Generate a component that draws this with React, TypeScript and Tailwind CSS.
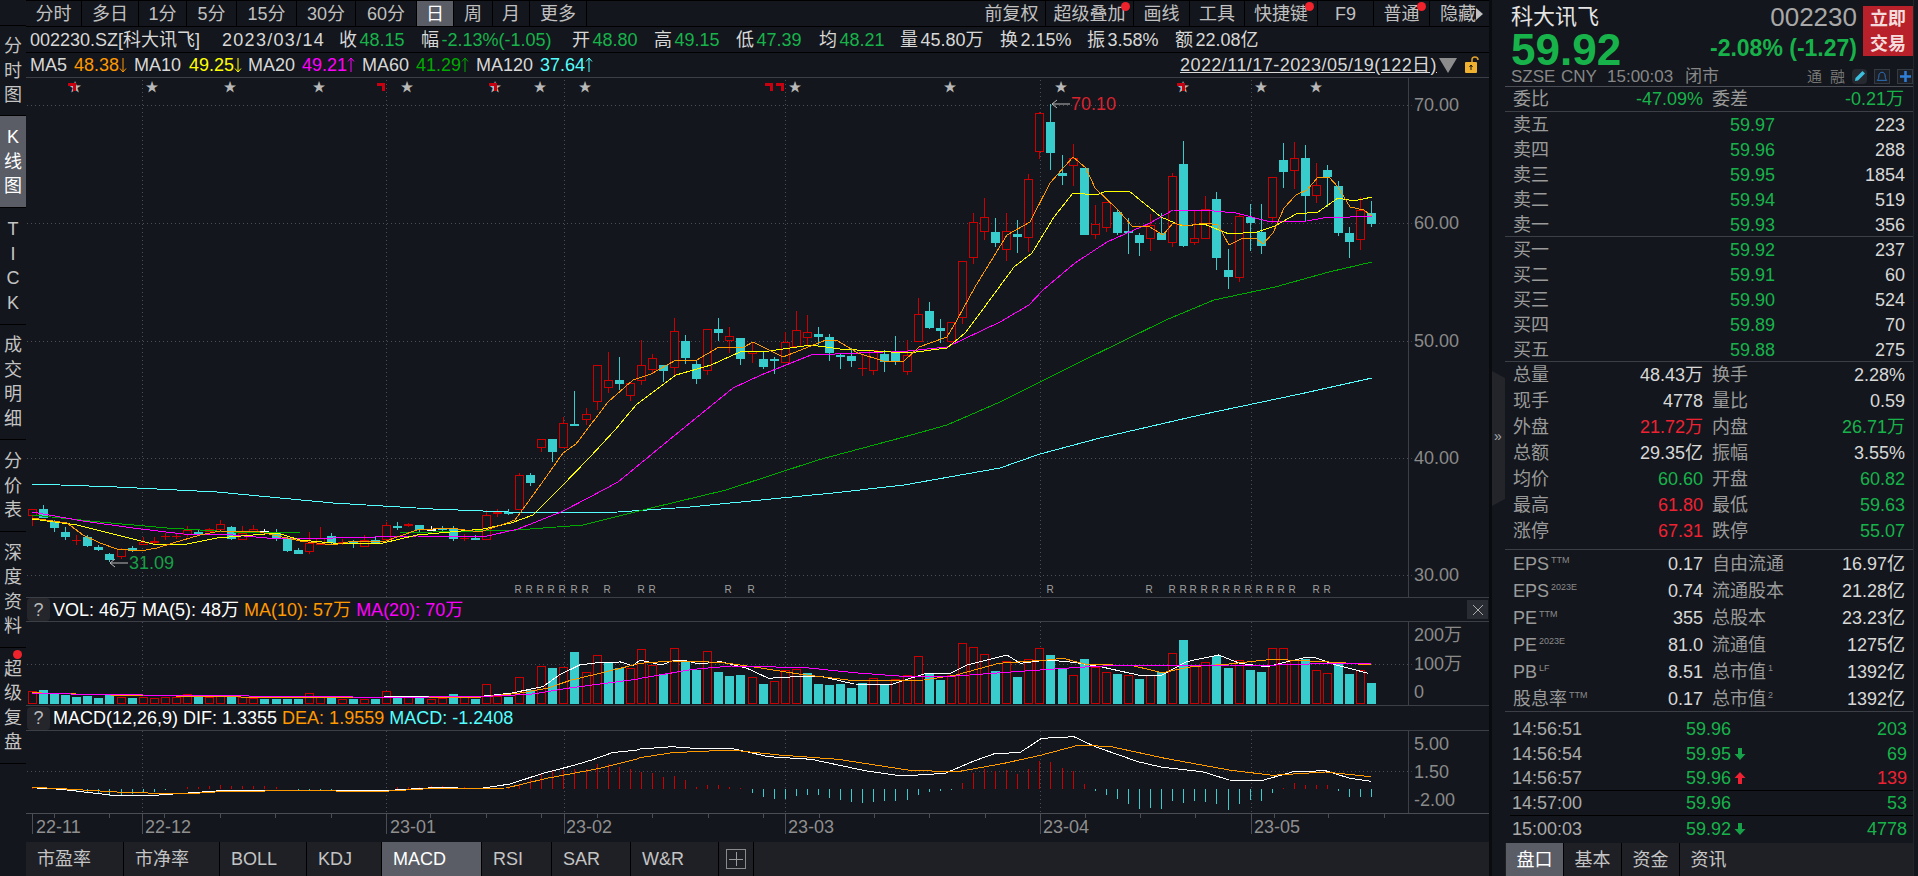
import React from "react";

type Candle = [number, number, number, number, number]; // corpo topo, corpo base, maxima, minima, 0 cai / 1 sobe / 2 neutro

const GREEN = "text-[#18b24b]";
const RED = "text-[#ee2233]";

const candles: Candle[] = [
  [509,515,509,526,1],[509,518,505,518,0],[522,528,520,532,0],[532,537,527,540,0],[540,540,535,545,1],
  [537,546,535,547,0],[547,550,545,551,0],[554,560,553,562,0],[549,556,548,559,1],[548,551,546,552,0],
  [542,544,537,545,1],[541,542,537,544,1],[536,536,533,540,1],[536,536,533,539,1],[530,534,526,537,1],
  [532,532,529,534,0],[529,531,528,532,1],[524,529,520,532,1],[527,539,526,540,0],[533,539,526,539,1],
  [529,531,525,533,1],[531,531,529,534,2],[532,539,529,541,0],[539,551,537,552,0],[550,554,548,554,0],
  [543,551,532,554,1],[538,544,527,545,1],[536,543,533,544,0],[542,542,539,545,1],[541,544,540,548,0],
  [540,546,535,547,1],[540,544,537,544,0],[525,539,522,540,1],[526,526,522,530,0],[524,525,523,527,1],
  [525,530,525,532,0],[529,529,526,531,2],[528,528,526,532,0],[528,539,526,541,0],[538,538,534,541,1],
  [538,538,535,540,0],[515,539,510,539,1],[512,513,509,517,1],[512,512,509,515,0],[475,509,473,510,1],
  [475,483,473,486,0],[439,447,439,452,1],[439,452,439,462,0],[423,447,417,448,1],[424,424,391,425,0],
  [414,419,408,425,1],[365,401,365,410,1],[380,387,352,393,1],[380,384,357,390,0],[383,395,383,401,1],
  [365,380,340,385,1],[358,369,354,374,1],[365,371,365,382,0],[331,367,318,375,1],[341,358,335,364,0],
  [364,379,360,384,0],[329,370,329,375,1],[329,333,318,341,0],[336,340,327,353,1],[338,359,338,365,0],
  [351,353,342,363,1],[359,367,352,369,0],[359,359,357,374,0],[342,362,332,362,1],[330,346,311,348,1],
  [332,337,315,345,1],[334,337,327,345,0],[337,353,334,361,0],[355,357,353,369,0],[356,361,348,367,0],
  [368,368,355,376,1],[350,370,350,375,1],[354,362,350,372,0],[351,361,336,365,0],[355,371,340,375,1],
  [314,341,298,341,1],[311,328,302,329,0],[328,331,319,343,0],[322,341,322,343,1],[261,317,261,324,1],
  [222,257,213,264,1],[217,231,198,240,1],[232,243,218,247,0],[231,249,213,261,1],[234,237,220,253,0],
  [179,237,174,252,1],[113,151,112,159,1],[122,153,104,170,0],[173,176,155,185,0],[158,165,144,186,1],
  [168,235,168,235,0],[224,234,205,239,1],[202,227,202,232,1],[212,233,209,235,0],[231,231,218,254,0],
  [235,243,233,256,0],[225,238,214,251,1],[233,240,213,240,0],[176,242,173,247,1],[164,246,141,247,0],
  [238,242,210,245,1],[209,238,196,238,1],[199,258,192,270,0],[270,277,249,289,0],[216,277,213,282,1],
  [217,223,204,251,0],[232,246,204,254,0],[177,217,177,223,1],[160,172,143,188,0],[158,170,142,189,1],
  [158,196,145,221,0],[185,195,163,203,1],[170,177,165,207,0],[186,233,181,236,0],[233,242,227,258,0],
  [210,239,197,250,1],[213,224,201,227,0],
];

const ma120 = "32,484 117,487 217,492 333,503 433,509 508,512 561,513 618,512 690,507 761,500 833,493 904,485 1000,468 1040,454 1100,438 1200,415 1300,394 1372,378";
const ma60 = "32,515 100,522 167,528 233,532 300,533 400,533 433,532 517,530 583,525 647,509 726,490 818,460 904,437 947,425 1000,402 1080,362 1166,320 1214,300 1275,287 1329,272 1372,262";
const ma20 = "32,512 83,521 133,528 183,534 233,535 267,538 333,538 417,536 483,537 518,529 561,512 590,497 618,482 669,440 733,388 761,375 811,355 908,351 947,347 1000,322 1029,305 1043,290 1075,263 1107,242 1150,223 1173,210 1214,211 1236,213 1271,222 1307,221 1329,217 1350,217 1372,216";
const ma10 = "32,519 77,525 117,535 157,545 187,544 217,538 277,533 300,540 333,543 383,543 417,535 450,532 483,529 511,523 533,515 561,487 590,457 615,430 636,405 669,380 676,375 711,365 740,352 769,351 811,345 840,349 908,353 947,348 965,333 975,320 1014,267 1032,253 1054,217 1073,193 1096,195 1107,191 1129,191 1161,217 1182,226 1204,224 1229,234 1257,232 1275,226 1296,214 1318,212 1338,198 1354,201 1372,197";
const ma5 = "32,518 67,523 83,535 100,543 117,549 140,551 157,548 173,543 200,535 220,531 260,532 300,541 333,545 353,541 383,542 417,530 450,528 480,532 507,523 515,520 544,480 563,453 576,444 608,402 633,380 651,374 676,360 695,361 719,347 744,347 753,342 783,357 826,340 836,340 858,353 883,361 904,361 919,347 947,337 957,320 975,287 1007,235 1030,222 1050,183 1073,157 1086,168 1095,188 1118,210 1132,226 1150,227 1163,235 1173,223 1186,226 1205,223 1218,225 1229,245 1243,238 1257,239 1263,244 1273,233 1284,208 1296,195 1307,190 1318,177 1329,177 1338,187 1350,207 1364,210 1372,216";

// topo das barras de volume; negativo = barra vermelha
const volTops = [
  -393,390,402,405,412,407,414,405,-412,414,-412,-415,-412,-412,-403,408,-410,-408,408,-411,
  -415,416,416,416,416,-400,-407,410,-418,417,-416,416,-394,412,-408,412,-416,-413,403,-408,
  416,-373,-408,410,-352,390,-319,324,-322,276,-337,-286,310,325,-325,-268,-315,343,-265,305,
  330,-274,336,348,345,-352,372,-364,-331,-328,340,372,375,372,384,369,-355,372,-358,-345,
  -289,342,360,-345,-250,-262,-283,333,-304,351,-298,-265,285,327,-346,297,-322,-337,342,-346,
  357,-345,337,-280,240,-318,-305,287,323,-300,330,336,-265,-265,-300,298,-330,-340,312,342,
  -330,369,
];

const macdBars = [
  2,1,0,-1,-9,-10,-17,-22,-18,-15,-14,-10,-3,0,5,6,8,11,8,8,7,7,5,-2,-3,-5,-4,-3,0,-2,0,0,0,5,5,6,7,7,6,4,3,2,3,6,
  15,28,43,52,55,58,60,75,73,65,58,51,46,34,37,26,6,10,11,6,3,-12,-25,-31,-31,-23,-20,-20,-28,-35,-40,-43,-40,-37,
  -38,-33,-20,-10,-7,-5,16,46,60,54,56,44,58,83,80,61,54,14,-8,-18,-30,-45,-60,-57,-62,-38,-43,-38,-40,-47,-64,-47,
  -35,-37,-14,2,16,12,10,10,-8,-26,-24,-26,
];

const leftPts = (p: number[]) => {
  const out: string[] = [];
  for (let i = 0; i < p.length; i += 2) out.push(`${(p[i] / 2.45).toFixed(1)},${(560 + p[i + 1] / 3).toFixed(1)}`);
  return out.join(" ");
};
const rightPts = (p: number[]) => {
  const out: string[] = [];
  for (let i = 0; i < p.length; i += 2) out.push(`${(640 + p[i] / 1.867).toFixed(1)},${(560 + p[i + 1] / 3).toFixed(1)}`);
  return out.join(" ");
};

const volWhite = leftPts([78,398,270,405,700,413,940,411,1170,410,1250,400,1330,380,1370,345,1420,315,1470,307,1520,306,1550,317]) + " " +
  rightPts([0,300,40,315,60,303,80,300,110,312,150,305,200,325,240,355,290,350,340,350,400,372,470,373,530,342,580,340,610,315,685,285,710,310,760,300,810,307,860,320,930,345,975,345,1020,305,1080,285,1120,310,1170,320,1240,293,1260,293,1300,315,1360,340]);
const volOrange = leftPts([78,398,270,405,700,413,940,411,1170,412,1270,400,1340,385,1400,360,1470,340,1520,325]) + " " +
  rightPts([0,310,60,303,150,307,210,320,300,343,400,362,470,362,530,360,590,345,670,310,760,300,790,295,830,312,920,317,975,338,1030,320,1100,312,1180,298,1240,302,1310,308,1365,315]);
const volPink = leftPts([78,400,270,404,610,408,940,412,1170,410,1300,403,1400,383,1560,358]) + " " +
  rightPts([0,355,100,328,170,318,310,323,400,338,500,350,590,348,700,335,820,322,900,315,1000,315,1100,315,1170,318,1200,313,1365,310]);
const macdWhite = leftPts([78,683,150,688,270,705,390,705,540,692,690,690,940,692,1060,683,1180,685,1250,672,1330,640,1400,618,1450,600,1500,578,1560,570]) + " " +
  rightPts([0,567,60,560,100,565,170,565,240,590,320,598,420,632,490,648,570,640,620,605,660,582,710,577,750,535,810,530,850,560,930,605,975,622,1050,635,1100,660,1160,662,1220,635,1280,632,1325,655,1365,664]);
const macdOrange = leftPts([78,682,150,686,300,697,450,702,540,695,700,692,940,694,1050,686,1240,684,1340,655,1470,625,1560,597]) + " " +
  rightPts([0,593,60,578,170,570,260,585,370,598,500,630,590,636,680,610,750,585,820,555,880,560,980,595,1100,630,1180,646,1280,636,1365,650]);

const gridX = [142, 386, 564, 785, 1040, 1251];
const stars = [75, 152, 230, 319, 407, 495, 540, 585, 795, 950, 1061, 1183, 1261, 1316];
const flags = [72, 381, 493, 769, 780, 1181];
const rMarks = [518, 529, 540, 551, 562, 574, 585, 607, 641, 652, 728, 751, 1050, 1149, 1172, 1183, 1193, 1204, 1215, 1226, 1237, 1248, 1259, 1270, 1281, 1292, 1316, 1327];
const shortTicks = [54, 109, 164, 220, 275, 331, 430, 486, 541, 597, 652, 708, 763, 819, 874, 929, 985, 1085, 1140, 1195, 1274, 1328, 1384];
const dateLabels: [string, number, number][] = [["22-11", 36, 32], ["22-12", 145, 142], ["23-01", 390, 386], ["23-02", 566, 564], ["23-03", 788, 785], ["23-04", 1043, 1040], ["23-05", 1254, 1251]];

const periodTabs = [
  { label: "分时", w: "w-[56px]" },
  { label: "多日", w: "w-[57px]" },
  { label: "1分", w: "w-[48px]" },
  { label: "5分", w: "w-[50px]" },
  { label: "15分", w: "w-[60px]" },
  { label: "30分", w: "w-[59px]" },
  { label: "60分", w: "w-[61px]" },
  { label: "日", w: "w-[37px]", active: true },
  { label: "周", w: "w-[39px]" },
  { label: "月", w: "w-[37px]" },
  { label: "更多", w: "w-[57px]" },
];

const toolTabs = [
  { label: "前复权", w: "w-[68px]" },
  { label: "超级叠加", w: "w-[88px]", dot: true },
  { label: "画线", w: "w-[56px]" },
  { label: "工具", w: "w-[55px]" },
  { label: "快捷键", w: "w-[73px]", dot: true },
  { label: "F9", w: "w-[56px]" },
  { label: "普通", w: "w-[56px]", dot: true },
];

const sideTabs = [
  { label: "分时图", h: "h-[90px]" },
  { label: "K线图", h: "h-[92px]", active: true },
  { label: "TICK", h: "h-[117px]" },
  { label: "成交明细", h: "h-[115px]" },
  { label: "分价表", h: "h-[92px]" },
  { label: "深度资料", h: "h-[116px]" },
  { label: "超级复盘", h: "h-[116px]", dot: true },
];

const indicatorTabs = [
  { label: "市盈率", w: "w-[98px]" },
  { label: "市净率", w: "w-[96px]" },
  { label: "BOLL", w: "w-[87px]" },
  { label: "KDJ", w: "w-[75px]" },
  { label: "MACD", w: "w-[100px]", active: true },
  { label: "RSI", w: "w-[70px]" },
  { label: "SAR", w: "w-[79px]" },
  { label: "W&R", w: "w-[88px]" },
];

const quoteItems = [
  { l: "收", v: "48.15", w: "w-[82px]", c: GREEN },
  { l: "幅", v: "-2.13%(-1.05)", w: "w-[151px]", c: GREEN },
  { l: "开", v: "48.80", w: "w-[82px]", c: GREEN },
  { l: "高", v: "49.15", w: "w-[82px]", c: GREEN },
  { l: "低", v: "47.39", w: "w-[83px]", c: GREEN },
  { l: "均", v: "48.21", w: "w-[81px]", c: GREEN },
  { l: "量", v: "45.80万", w: "w-[100px]", c: "" },
  { l: "换", v: "2.15%", w: "w-[87px]", c: "" },
  { l: "振", v: "3.58%", w: "w-[88px]", c: "" },
  { l: "额", v: "22.08亿", w: "", c: "" },
];

const asks = [["卖五", "59.97", "223"], ["卖四", "59.96", "288"], ["卖三", "59.95", "1854"], ["卖二", "59.94", "519"], ["卖一", "59.93", "356"]];
const bids = [["买一", "59.92", "237"], ["买二", "59.91", "60"], ["买三", "59.90", "524"], ["买四", "59.89", "70"], ["买五", "59.88", "275"]];

const stats = [
  ["总量", "48.43万", "", "换手", "2.28%", ""],
  ["现手", "4778", "", "量比", "0.59", ""],
  ["外盘", "21.72万", RED, "内盘", "26.71万", GREEN],
  ["总额", "29.35亿", "", "振幅", "3.55%", ""],
  ["均价", "60.60", GREEN, "开盘", "60.82", GREEN],
  ["最高", "61.80", RED, "最低", "59.63", GREEN],
  ["涨停", "67.31", RED, "跌停", "55.07", GREEN],
];

const funda = [
  ["EPS", "TTM", "0.17", "自由流通", "", "16.97亿"],
  ["EPS", "2023E", "0.74", "流通股本", "", "21.28亿"],
  ["PE", "TTM", "355", "总股本", "", "23.23亿"],
  ["PE", "2023E", "81.0", "流通值", "", "1275亿"],
  ["PB", "LF", "8.51", "总市值", "1", "1392亿"],
  ["股息率", "TTM", "0.17", "总市值", "2", "1392亿"],
];

const ticks = [
  { t: "14:56:51", p: "59.96", v: "203", c: GREEN, line: false },
  { t: "14:56:54", p: "59.95", v: "69", c: GREEN, a: "d", line: false },
  { t: "14:56:57", p: "59.96", v: "139", c: RED, a: "u", line: true },
  { t: "14:57:00", p: "59.96", v: "53", c: GREEN, line: true },
  { t: "15:00:03", p: "59.92", v: "4778", c: GREEN, a: "d", line: false },
];

const cx = (i: number) => Math.round(32 + 11.07 * i);

function SlimArrow({ up, color }: { up?: boolean; color: string }) {
  return (
    <svg width="8" height="16" viewBox="0 0 8 16" fill="none" stroke={color} strokeWidth="1">
      {up ? <path d="M4 15V1M1 4.500L4 1l3 3.500" /> : <path d="M4 1v14M1 11.500L4 15l3-3.500" />}
    </svg>
  );
}

function Candles() {
  return (
    <g shapeRendering="crispEdges">
      {candles.map((c, i) => {
        const x = cx(i);
        const color = c[4] === 1 ? "#cc0000" : c[4] === 2 ? "#ffffff" : "#38cccc";
        return (
          <g key={i}>
            <line x1={x + 0.5} x2={x + 0.5} y1={c[2]} y2={c[0]} stroke={color} />
            <line x1={x + 0.5} x2={x + 0.5} y1={c[1]} y2={c[3]} stroke={color} />
            {c[0] === c[1] ? (
              <line x1={x - 4} x2={x + 5} y1={c[0] + 0.5} y2={c[0] + 0.5} stroke={color} strokeWidth={c[4] === 1 ? 1 : 2} />
            ) : c[4] === 1 ? (
              <rect x={x - 3.5} y={c[0] + 0.5} width={8} height={c[1] - c[0]} fill="#13161c" stroke={color} />
            ) : (
              <rect x={x - 4} y={c[0]} width={9} height={c[1] - c[0]} fill={color} />
            )}
          </g>
        );
      })}
    </g>
  );
}

function Grid({ ys, y1, y2 }: { ys: number[]; y1: number; y2: number }) {
  return (
    <g stroke="#4a4e55" strokeDasharray="1 3" shapeRendering="crispEdges">
      {ys.map((y) => (
        <line key={y} x1={27} x2={1408} y1={y + 0.5} y2={y + 0.5} />
      ))}
      {gridX.map((x) => (
        <line key={x} x1={x + 0.5} x2={x + 0.5} y1={y1} y2={y2} />
      ))}
    </g>
  );
}

function Axis({ y1, y2, ticks: tk }: { y1: number; y2: number; ticks: number[] }) {
  return (
    <g stroke="#3c3f45" shapeRendering="crispEdges">
      <line x1={1408.5} x2={1408.5} y1={y1} y2={y2} />
      {tk.map((y) => (
        <line key={y} x1={1408} x2={1413} y1={y + 0.5} y2={y + 0.5} strokeDasharray="1 2" />
      ))}
    </g>
  );
}

function AxisLabel({ y, children }: { y: number; children: React.ReactNode }) {
  return (
    <text x={1414} y={y} dominantBaseline="central" fontSize="18" fill="#8a8a8a">
      {children}
    </text>
  );
}

function MainChart() {
  const levels = [105, 223, 341, 458, 575];
  return (
    <svg width="1463" height="519" viewBox="26 78 1463 519" className="block shrink-0">
      <Grid ys={levels} y1={80} y2={597} />
      <Axis y1={78} y2={597} ticks={levels} />
      {stars.map((x) => (
        <text key={x} x={x} y={86} textAnchor="middle" dominantBaseline="central" fontSize="13" fill="#b8b8b8">
          ★
        </text>
      ))}
      {flags.map((x) => (
        <path key={x} d={`M${x - 4} 83h8v8h-3v-5h-5z`} fill="#c80010" />
      ))}
      <Candles />
      <g fill="none" shapeRendering="crispEdges">
        <polyline points={ma120} stroke="#55ffff" />
        <polyline points={ma60} stroke="#00aa00" />
        <polyline points={ma20} stroke="#ff00ff" />
        <polyline points={ma10} stroke="#ffff00" />
        <polyline points={ma5} stroke="#ff9900" />
      </g>
      <path d="M1070 104h-18m5-4l-5 4 5 4" stroke="#b8b8b8" fill="none" />
      <text x={1071} y={104} dominantBaseline="central" fontSize="18" fill="#d8232f">70.10</text>
      <path d="M128 563h-18m5-4l-5 4 5 4" stroke="#b8b8b8" fill="none" />
      <text x={129} y={563} dominantBaseline="central" fontSize="18" fill="#18a048">31.09</text>
      {rMarks.map((x, i) => (
        <text key={i} x={x} y={589} textAnchor="middle" dominantBaseline="central" fontSize="10" fill="#a0a0a0">R</text>
      ))}
      <AxisLabel y={105}>70.00</AxisLabel>
      <AxisLabel y={223}>60.00</AxisLabel>
      <AxisLabel y={341}>50.00</AxisLabel>
      <AxisLabel y={458}>40.00</AxisLabel>
      <AxisLabel y={575}>30.00</AxisLabel>
    </svg>
  );
}

function VolChart() {
  return (
    <svg width="1463" height="83" viewBox="26 622 1463 83" className="block shrink-0">
      <Grid ys={[664]} y1={622} y2={705} />
      <Axis y1={622} y2={705} ticks={[664]} />
      <g shapeRendering="crispEdges">
        {volTops.map((v, i) => {
          const top = Math.round(560 + Math.abs(v) / 3);
          const x = cx(i);
          return v < 0 ? (
            <rect key={i} x={x - 3.5} y={top + 0.5} width={8} height={703 - top} fill="#13161c" stroke="#cc0000" />
          ) : (
            <rect key={i} x={x - 4} y={top} width={9} height={704 - top} fill="#38cccc" />
          );
        })}
      </g>
      <g fill="none" shapeRendering="crispEdges">
        <polyline points={volWhite} stroke="#ffffff" />
        <polyline points={volOrange} stroke="#ff9900" />
        <polyline points={volPink} stroke="#ff00ff" />
      </g>
      <AxisLabel y={635}>200万</AxisLabel>
      <AxisLabel y={664}>100万</AxisLabel>
      <AxisLabel y={692}>0</AxisLabel>
    </svg>
  );
}

function MacdChart() {
  return (
    <svg width="1463" height="82" viewBox="26 731 1463 82" className="block shrink-0">
      <Grid ys={[771]} y1={731} y2={813} />
      <Axis y1={731} y2={813} ticks={[771]} />
      <g shapeRendering="crispEdges">
        {macdBars.map((v, i) => {
          const h = Math.abs(v) / 3;
          return (
            <line
              key={i}
              x1={cx(i) + 0.5}
              x2={cx(i) + 0.5}
              y1={788.5}
              y2={v > 0 ? 788.5 - h : 788.5 + h}
              stroke={v > 0 ? "#cc0000" : "#38cccc"}
            />
          );
        })}
      </g>
      <g fill="none" shapeRendering="crispEdges">
        <polyline points={macdWhite} stroke="#ffffff" />
        <polyline points={macdOrange} stroke="#ff9900" />
      </g>
      <AxisLabel y={744}>5.00</AxisLabel>
      <AxisLabel y={772}>1.50</AxisLabel>
      <AxisLabel y={800}>-2.00</AxisLabel>
    </svg>
  );
}

function DateAxis() {
  return (
    <svg width="1463" height="29" viewBox="26 813 1463 29" className="block shrink-0">
      <g stroke="#4a4d53" shapeRendering="crispEdges">
        <line x1={26} x2={1489} y1={813.5} y2={813.5} />
        {shortTicks.map((x) => (
          <line key={x} x1={x + 0.5} x2={x + 0.5} y1={813} y2={818} />
        ))}
        {dateLabels.map(([, , x]) => (
          <line key={x} x1={x + 0.5} x2={x + 0.5} y1={813} y2={834} />
        ))}
      </g>
      {dateLabels.map(([t, x]) => (
        <text key={t} x={x} y={827} dominantBaseline="central" fontSize="18" fill="#8f8f8f">{t}</text>
      ))}
    </svg>
  );
}

function HelpButton() {
  return (
    <span className="mx-px flex h-[23px] w-[23px] shrink-0 items-center justify-center rounded-sm bg-[#24262c] text-[#bbbbbb]">
      ?
    </span>
  );
}

function Row({ children, className = "" }: { children: React.ReactNode; className?: string }) {
  return <div className={`flex items-center ${className}`}>{children}</div>;
}

export default function App() {
  return (
    <div className="flex h-[876px] w-[1918px] overflow-hidden bg-[#13161c] text-[18px] leading-none text-[#d8d8d8] [font-family:'Liberation_Sans','Noto_Sans_CJK_SC',sans-serif]">
      {/* BARRA LATERAL */}
      <aside className="w-[26px] shrink-0">
        <div className="h-[26px] border-b border-black" />
        {sideTabs.map((t) => (
          <div
            key={t.label}
            className={`relative flex ${t.h} flex-col items-center justify-center border-b border-black ${t.active ? "bg-[#5a5d66] text-white" : "text-[#c4c4c4]"}`}
          >
            {t.dot && <span className="absolute top-[2px] left-[13px] h-[9px] w-[9px] rounded-full bg-[#f0222c]" />}
            {Array.from(t.label).map((ch, i) => (
              <span key={i} className="flex h-[24.5px] items-center">
                {ch}
              </span>
            ))}
          </div>
        ))}
      </aside>

      {/* GRAFICO */}
      <main className="flex w-[1463px] shrink-0 flex-col">
        <div className="flex h-[26px] items-stretch border-t border-black">
          {periodTabs.map((t) => (
            <div
              key={t.label}
              className={`flex ${t.w} items-center justify-center border-r border-black ${t.active ? "bg-[#5a5d66] text-white" : "text-[#c0c0c0]"}`}
            >
              {t.label}
            </div>
          ))}
          <div className="flex-1" />
          {toolTabs.map((t) => (
            <div key={t.label} className={`relative flex ${t.w} items-center justify-center border-r border-black text-[#c0c0c0]`}>
              {t.label}
              {t.dot && <span className="absolute top-[1px] right-[3px] h-[9px] w-[9px] rounded-full bg-[#f0222c]" />}
            </div>
          ))}
          <div className="flex w-[59px] items-center pl-[10px] text-[#c0c0c0]">
            隐藏
            <span className="h-0 w-0 border-y-[6px] border-l-[7px] border-y-transparent border-l-[#c0c0c0]" />
          </div>
        </div>

        <Row className="h-[27px] border-y border-black pl-[4px]">
          <span className="w-[192px]">002230.SZ[科大讯飞]</span>
          <span className="w-[117px] tracking-[1.3px]">2023/03/14</span>
          {quoteItems.map((q) => (
            <span key={q.l} className={`flex ${q.w}`}>
              {q.l}
              <span className={`ml-[2.500px] ${q.c}`}>{q.v}</span>
            </span>
          ))}
        </Row>

        <Row className="h-[25px] border-b border-[#3c3f45] pl-[4px]">
          <span className="flex w-[104px] items-center gap-[7px]">MA5<span className="flex items-center text-[#ff9900]">48.38<SlimArrow color="#ff9900" /></span></span>
          <span className="flex w-[114px] items-center gap-[8px]">MA10<span className="flex items-center text-[#ffff00]">49.25<SlimArrow color="#ffff00" /></span></span>
          <span className="flex w-[114px] items-center gap-[7px]">MA20<span className="flex items-center text-[#ff00ff]">49.21<SlimArrow up color="#ff00ff" /></span></span>
          <span className="flex w-[114px] items-center gap-[7px]">MA60<span className="flex items-center text-[#00aa00]">41.29<SlimArrow up color="#00aa00" /></span></span>
          <span className="flex items-center gap-[7px]">MA120<span className="flex items-center text-[#55ffff]">37.64<SlimArrow up color="#55ffff" /></span></span>
          <span className="ml-auto tracking-[0.45px] underline">2022/11/17-2023/05/19(122日)</span>
          <span className="ml-[2px] h-0 w-0 border-x-[9px] border-t-[15px] border-x-transparent border-t-[#8c8c8c]" />
          <svg width="20" height="18" viewBox="0 0 20 18" className="mr-[5px] ml-[7px]">
            <rect x="1" y="6" width="12" height="11" rx="1" fill="#f0b030" />
            <path d="M8 6V3.500C8 1.800 9.300 1 10.800 1S14 2 14 4" fill="none" stroke="#e0a030" strokeWidth="1.500" />
            <path d="M7 9v5M5.500 11L7 9l1.500 2" stroke="#13161c" fill="none" />
          </svg>
        </Row>

        <MainChart />

        <Row className="h-[25px] border-y border-[#3c3f45] text-white">
          <HelpButton />
          <span className="ml-[2px] whitespace-pre">VOL: 46万 MA(5): 48万 </span>
          <span className="whitespace-pre text-[#ff9900]">MA(10): 57万 </span>
          <span className="text-[#ff00ff]">MA(20): 70万</span>
          <span className="mr-px ml-auto flex h-[19px] w-[21px] items-center justify-center bg-[#2a2c33] text-[#aaaaaa]">
            <svg width="12" height="12" viewBox="0 0 12 12" stroke="currentColor" fill="none"><path d="M1 1l10 10M11 1L1 11" /></svg>
          </span>
        </Row>

        <VolChart />

        <Row className="h-[26px] border-y border-[#3c3f45] text-white">
          <HelpButton />
          <span className="ml-[2px] whitespace-pre">MACD(12,26,9) DIF: 1.3355 </span>
          <span className="whitespace-pre text-[#ff9900]">DEA: 1.9559 </span>
          <span className="text-[#55ffff]">MACD: -1.2408</span>
        </Row>

        <MacdChart />
        <DateAxis />

        <div className="flex h-[34px] items-stretch bg-[#1f2026]">
          {indicatorTabs.map((t) => (
            <div
              key={t.label}
              className={`flex ${t.w} items-center border-r border-black pl-[11px] ${t.active ? "bg-[#5a5d66] text-white" : "text-[#c4c4c4]"}`}
            >
              {t.label}
            </div>
          ))}
          <div className="flex w-[35px] items-center justify-center border-r border-black">
            <span className="flex h-[20px] w-[20px] items-center justify-center border border-[#8a8a8a]">
              <svg width="14" height="14" viewBox="0 0 14 14" stroke="#9a9a9a" shapeRendering="crispEdges"><path d="M7.500 0v14M0 7.500h14" /></svg>
            </span>
          </div>
        </div>
      </main>

      {/* DIVISOR E BOTAO DE RECOLHER */}
      <div className="w-[3px] shrink-0 bg-[#0a0b0e]" />
      <div className="flex w-[13px] shrink-0 items-center">
        <div className="relative">
          <svg width="13" height="135" viewBox="0 0 13 135" className="block">
            <path d="M0 0l13 7v121l-13 7z" fill="#23252b" />
          </svg>
          <span className="absolute top-[58px] left-[2px] text-[14px] text-[#aaaaaa]">»</span>
        </div>
      </div>

      {/* PAINEL DIREITO */}
      <section className="flex w-[408px] shrink-0 flex-col">
        <div className="h-[87px] shrink-0 border-b border-[#4a4d53] pl-[6px]">
          <div className="flex h-[66px] items-start justify-between">
            <div>
              <div className="mt-[6px] h-[22px] text-[22px] text-[#e4e4e4]">科大讯飞</div>
              <div className={`mt-[6px] text-[44px] leading-[32px] font-bold ${GREEN}`}>59.92</div>
            </div>
            <div className="flex items-start">
              <div className="flex flex-col items-end">
                <div className="mt-[4px] text-[26px] leading-[26px] text-[#a8a8a8]">002230</div>
                <div className={`mt-[7px] text-[23px] font-bold ${GREEN}`}>-2.08% (-1.27)</div>
              </div>
              <div className="mt-[6px] ml-[6px] flex h-[50px] w-[50px] flex-col items-center justify-center gap-[7px] bg-[#b8202a] text-[18px] font-bold text-[#f4dcdc]">
                <span>立即</span>
                <span>交易</span>
              </div>
            </div>
          </div>
          <div className="mt-px flex h-[18px] items-center text-[17px] text-[#878787]">
            <span className="w-[50px]">SZSE</span>
            <span className="w-[46px]">CNY</span>
            <span className="w-[78px]">15:00:03</span>
            <span>闭市</span>
            <span className="ml-auto text-[15px] text-[#767676]">通</span>
            <span className="ml-[8px] text-[15px] text-[#767676]">融</span>
            <span className="ml-[7px] flex h-[15px] w-[15px] items-center justify-center rounded-sm bg-[#262a30]">
              <svg width="12" height="12" viewBox="0 0 12 12"><path d="M8.500 1l2.500 2.500L4 10.500 1 11l.5-3z" fill="#3cc0e0" /></svg>
            </span>
            <span className="ml-[7px] flex h-[15px] w-[16px] items-center justify-center border border-[#343a42] bg-[#1c2026]">
              <svg width="12" height="13" viewBox="0 0 14 14" fill="none" stroke="#2f7fd8"><path d="M1.500 11.500h11c-1.300-1.300-1.800-3-1.800-5 0-2.500-1.600-4.500-3.700-4.500S3.300 4 3.300 6.500c0 2-.5 3.700-1.800 5z" /></svg>
            </span>
            <span className="ml-[7px] flex h-[15px] w-[16px] items-center justify-center border border-[#343a42] bg-[#1c2026]">
              <svg width="11" height="11" viewBox="0 0 13 13" fill="#2f7fd8"><path d="M5 0h3v5h5v3H8v5H5V8H0V5h5z" /></svg>
            </span>
          </div>
        </div>

        <Row className="h-[25px] shrink-0 border-b border-[#3c3f45] pl-[8px] text-[#9a9a9a]">
          <span className="w-[56px]">委比</span>
          <span className={`w-[134px] text-right ${GREEN}`}>-47.09%</span>
          <span className="ml-[9px]">委差</span>
          <span className={`ml-auto pr-[9px] ${GREEN}`}>-0.21万</span>
        </Row>

        <div className="h-[125px] shrink-0 border-b border-[#3c3f45]">
          {asks.map(([a, p, v]) => (
            <Row key={a} className="h-[25px] pl-[8px] text-[#9a9a9a]">
              <span className="w-[217px]">{a}</span>
              <span className={GREEN}>{p}</span>
              <span className="ml-auto pr-[8px] text-[#d8d8d8]">{v}</span>
            </Row>
          ))}
        </div>
        <div className="h-[125px] shrink-0 border-b border-[#3c3f45]">
          {bids.map(([a, p, v]) => (
            <Row key={a} className="h-[25px] pl-[8px] text-[#9a9a9a]">
              <span className="w-[217px]">{a}</span>
              <span className={GREEN}>{p}</span>
              <span className="ml-auto pr-[8px] text-[#d8d8d8]">{v}</span>
            </Row>
          ))}
        </div>

        <div className="h-[188px] shrink-0 border-b border-[#3c3f45]">
          {stats.map(([a, v1, c1, b, v2, c2]) => (
            <Row key={a} className="h-[26px] pl-[8px] text-[#9a9a9a]">
              <span className="w-[40px]">{a}</span>
              <span className={`w-[150px] text-right ${c1 || "text-[#d8d8d8]"}`}>{v1}</span>
              <span className="ml-[9px]">{b}</span>
              <span className={`ml-auto pr-[8px] ${c2 || "text-[#d8d8d8]"}`}>{v2}</span>
            </Row>
          ))}
        </div>

        <div className="h-[162px] shrink-0 border-b border-[#3c3f45]">
          {funda.map(([a, sup, v, b, sup2, v2]) => (
            <Row key={a + sup} className="h-[27px] pl-[8px] text-[#9a9a9a]">
              <span className="flex w-[100px] items-start">
                {a}
                <span className="mt-[1px] ml-[2px] text-[9px] text-[#8a8a8a]">{sup}</span>
              </span>
              <span className="w-[90px] text-right text-[#d8d8d8]">{v}</span>
              <span className="ml-[9px] flex items-start">
                {b}
                {sup2 && <span className="mt-[1px] ml-[2px] text-[9px] text-[#8a8a8a]">{sup2}</span>}
              </span>
              <span className="ml-auto pr-[8px] text-[#d8d8d8]">{v2}</span>
            </Row>
          ))}
        </div>

        <div className="flex flex-1 flex-col pt-[4px] pl-[5px]">
          {ticks.map((t) => (
            <Row key={t.t} className={`h-[25px] ${t.line ? "border-b border-black" : ""}`}>
              <span className="w-[176px] pl-[2px] text-[#aaaaaa]">{t.t}</span>
              <span className={GREEN}>{t.p}</span>
              {t.a && (
                <svg width="12" height="12" viewBox="0 0 12 12" className="ml-[3px]" fill={t.a === "u" ? "#ee2233" : "#18a048"}>
                  {t.a === "u" ? <path d="M6 0l5.500 6H8v6H4V6H.5z" /> : <path d="M4 0h4v6h3.500L6 12 .5 6H4z" />}
                </svg>
              )}
              <span className={`ml-auto pr-[6px] ${t.c}`}>{t.v}</span>
            </Row>
          ))}
        </div>

        <div className="flex h-[33px] shrink-0 items-stretch bg-[#1f2026]">
          <div className="ml-px flex w-[57px] items-center justify-center bg-[#5a5d66] text-white">盘口</div>
          <div className="flex w-[58px] items-center justify-center border-l border-black text-[#c4c4c4]">基本</div>
          <div className="flex w-[58px] items-center justify-center border-l border-black text-[#c4c4c4]">资金</div>
          <div className="flex w-[58px] items-center justify-center border-l border-black text-[#c4c4c4]">资讯</div>
        </div>
      </section>

      <div className="flex-1 border-l border-[#23252b]" />
    </div>
  );
}
